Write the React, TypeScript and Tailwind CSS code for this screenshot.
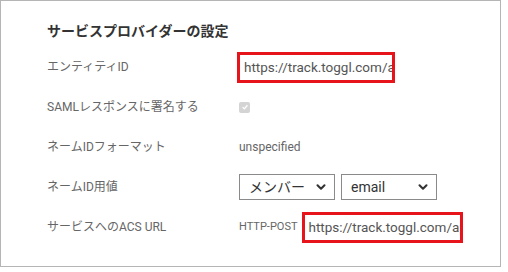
import { ChevronDown } from "lucide-react";

const font = { fontFamily: '"Roboto", "Noto Sans CJK JP", sans-serif' };

function Row({ label, children }: { label: string; children: React.ReactNode }) {
  return (
    <div className="flex h-10 items-center">
      <div className="w-[192px] shrink-0 text-[12px] text-[#666]">{label}</div>
      <div className="flex items-center">{children}</div>
    </div>
  );
}

function UrlBox({ width }: { width: string }) {
  return (
    <div className={`h-[31px] overflow-hidden whitespace-nowrap border-[3px] border-[#e8141c] bg-white pl-[4px] text-[13.5px] leading-[25px] text-[#555] ${width}`}>
      https://track.toggl.com/ap
    </div>
  );
}

function Select({ value, width }: { value: string; width: string }) {
  return (
    <div className={`flex h-[26px] items-center justify-between border border-[#8a8a8a] bg-white pl-[9px] pr-[6px] text-[14px] text-[#333] ${width}`}>
      <span>{value}</span>
      <ChevronDown size={14} strokeWidth={3.5} className="text-[#333]" />
    </div>
  );
}

export default function App() {
  return (
    <div className="h-[272px] w-[508px] bg-white" style={font}>
      <div className="h-[267px] w-[501px] border border-[#b5b5b5] pl-[46px] pt-[20px]">
        <h2 className="mb-[6px] text-[14px] font-bold leading-[20px] text-[#333]">サービスプロバイダーの設定</h2>
        <Row label="エンティティID">
          <div className="-ml-[2px]">
            <UrlBox width="w-[158px]" />
          </div>
        </Row>
        <Row label="SAMLレスポンスに署名する">
          <div className="flex h-[11px] w-[11px] items-center justify-center rounded-[2px] bg-[#d4d4d4]">
            <svg viewBox="0 0 10 10" className="h-[8px] w-[8px]">
              <path d="M2 5.2 L4.2 7.4 L8 2.8" fill="none" stroke="#fff" strokeWidth="1.6" />
            </svg>
          </div>
        </Row>
        <Row label="ネームIDフォーマット">
          <span className="text-[12px] text-[#666]">unspecified</span>
        </Row>
        <Row label="ネームID用値">
          <div className="flex gap-[6px]">
            <Select value="メンバー" width="w-[96px]" />
            <Select value="email" width="w-[96px]" />
          </div>
        </Row>
        <Row label="サービスへのACS URL">
          <span className="mr-[4px] text-[11px] text-[#666]">HTTP-POST</span>
          <UrlBox width="w-[161px]" />
        </Row>
      </div>
    </div>
  );
}
